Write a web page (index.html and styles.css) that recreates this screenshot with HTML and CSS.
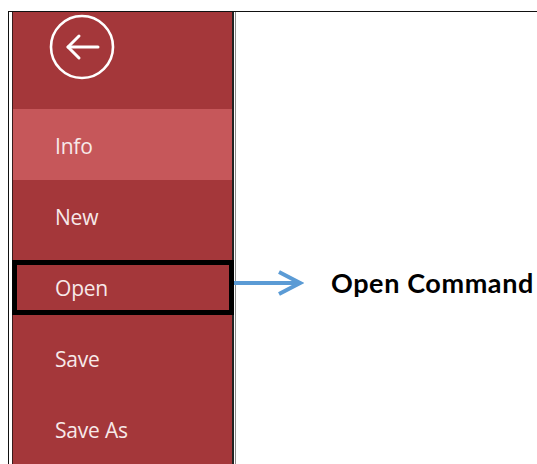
FILE: index.html
```html
<!DOCTYPE html>
<html lang="en">
<head>
<meta charset="utf-8">
<title>Backstage – Open</title>
<link rel="stylesheet" href="styles.css">
</head>
<body>
<div class="frame">
  <nav class="backstage">
    <div class="back-area">
      <svg class="back-btn" width="66" height="66" viewBox="0 0 66 66" aria-label="Back">
        <circle cx="33" cy="33" r="31" fill="none" stroke="#fff" stroke-width="2.6"/>
        <path d="M19 33 H49" stroke="#fff" stroke-width="3" fill="none" stroke-linecap="round"/>
        <path d="M30 22 L19 33 L30 44" stroke="#fff" stroke-width="3" fill="none" stroke-linecap="round" stroke-linejoin="round"/>
      </svg>
    </div>
    <ul class="menu">
      <li class="item active">Info</li>
      <li class="item">New</li>
      <li class="item marked">Open</li>
      <li class="item">Save</li>
      <li class="item">Save As</li>
    </ul>
  </nav>
  <main class="canvas">
    <div class="callout">
      <svg class="pointer" width="74" height="28" viewBox="0 0 74 28">
        <path d="M0 14 H70" stroke="#5b9bd5" stroke-width="4" fill="none"/>
        <path d="M49 3 L70 14 L49 25" stroke="#5b9bd5" stroke-width="4" fill="none" stroke-linejoin="miter"/>
      </svg>
      <span class="callout-label">Open Command</span>
    </div>
  </main>
</div>
</body>
</html>
```

FILE: styles.css
```css
html, body {
  margin: 0;
  padding: 0;
  background: #fff;
}

body {
  height: 464px;
  overflow: hidden;
}

.frame {
  display: flex;
  margin: 11px 0 0 8px;
  height: 453px;
  border-top: 1px solid #111;
  border-left: 1px solid #111;
  padding-left: 3px;
}

.backstage {
  width: 219px;
  flex: none;
  background: #a4373a;
  border-left: 1px solid #3a1a1a;
  border-right: 2px solid #222;
  box-shadow: 1px 0 0 #fff, 2px 0 0 #8a8a8a;
  display: flex;
  flex-direction: column;
}

.back-area {
  height: 97px;
  padding: 2px 0 0 36px;
  box-sizing: border-box;
}

.back-btn {
  display: block;
}

.menu {
  list-style: none;
  margin: 0;
  padding: 0;
}

.item {
  height: 71px;
  box-sizing: border-box;
  padding: 3px 0 0 42px;
  display: flex;
  align-items: center;
  font-family: "Open Sans", "Noto Sans", sans-serif;
  font-size: 21px;
  letter-spacing: -0.2px;
  color: #f7e9e9;
}

.item.active {
  background: #c6575a;
}

.item.marked {
  position: relative;
}

/* annotation box drawn around the Open command */
.item.marked::after {
  content: "";
  position: absolute;
  left: -1px;
  right: -2px;
  top: 9px;
  bottom: 7px;
  border: 5px solid #000;
}

.canvas {
  flex: 1;
  padding-top: 254px;
}

.callout {
  display: flex;
  align-items: center;
  margin-left: -4px;
}

.pointer {
  display: block;
  flex: none;
}

.callout-label {
  margin-left: 27px;
  font-family: Lato, "Liberation Sans", sans-serif;
  font-weight: 700;
  font-size: 27px;
  letter-spacing: 0.6px;
  color: #000;
  white-space: nowrap;
}
```
